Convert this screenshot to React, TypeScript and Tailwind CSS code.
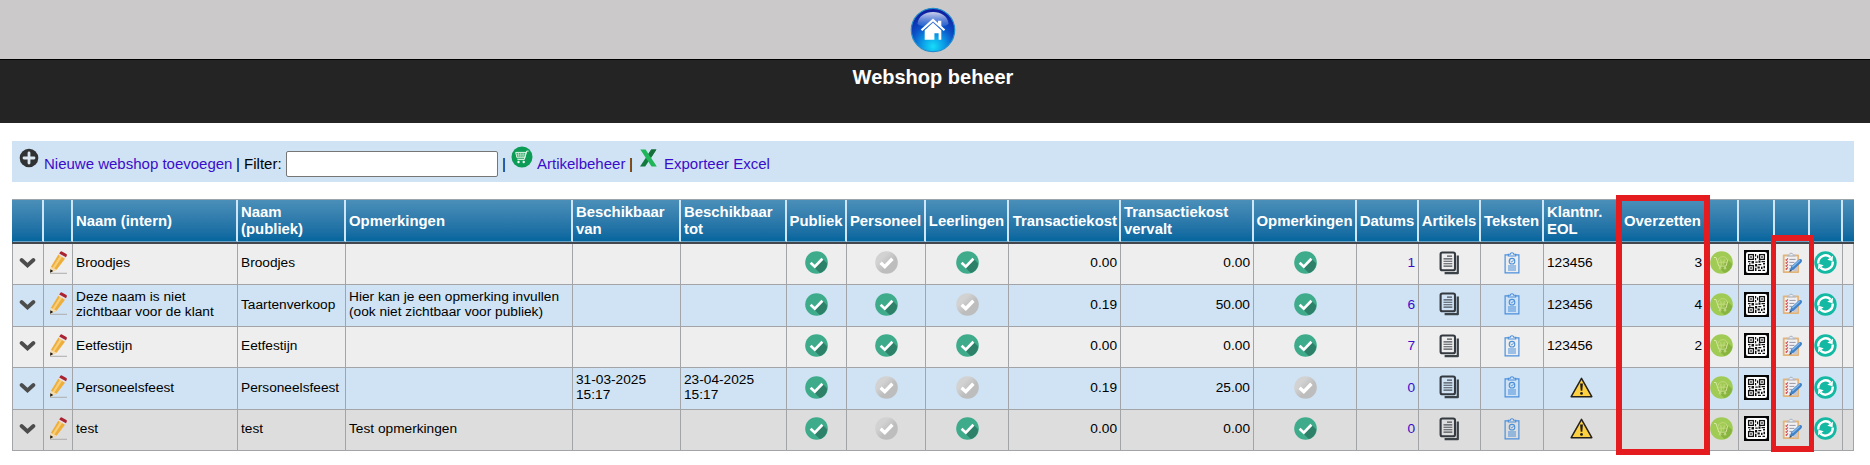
import React from "react";

type Row = {
  intern: string[];
  publiek: string;
  opm: string[];
  van: string[];
  tot: string[];
  flags: boolean[];
  kost: string;
  vervalt: string;
  opmerkingen: boolean;
  datums: number;
  klant: string;
  over: string;
  tone: string;
};

const rows: Row[] = [
  { intern: ["Broodjes"], publiek: "Broodjes", opm: [], van: [], tot: [], flags: [true, false, true], kost: "0.00", vervalt: "0.00", opmerkingen: true, datums: 1, klant: "123456", over: "3", tone: "h-[41px] bg-[#eeeeee]" },
  { intern: ["Deze naam is niet", "zichtbaar voor de klant"], publiek: "Taartenverkoop", opm: ["Hier kan je een opmerking invullen", "(ook niet zichtbaar voor publiek)"], van: [], tot: [], flags: [true, true, false], kost: "0.19", vervalt: "50.00", opmerkingen: true, datums: 6, klant: "123456", over: "4", tone: "h-[42px] bg-[#cfe3f4]" },
  { intern: ["Eetfestijn"], publiek: "Eetfestijn", opm: [], van: [], tot: [], flags: [true, true, true], kost: "0.00", vervalt: "0.00", opmerkingen: true, datums: 7, klant: "123456", over: "2", tone: "h-[41px] bg-[#eeeeee]" },
  { intern: ["Personeelsfeest"], publiek: "Personeelsfeest", opm: [], van: ["31-03-2025", "15:17"], tot: ["23-04-2025", "15:17"], flags: [true, false, false], kost: "0.19", vervalt: "25.00", opmerkingen: false, datums: 0, klant: "", over: "", tone: "h-[42px] bg-[#cfe3f4]" },
  { intern: ["test"], publiek: "test", opm: ["Test opmerkingen"], van: [], tot: [], flags: [true, false, true], kost: "0.00", vervalt: "0.00", opmerkingen: true, datums: 0, klant: "", over: "", tone: "h-[41px] bg-[#dddddd]" },
];

const headers: string[][] = [
  [], [], ["Naam (intern)"], ["Naam", "(publiek)"], ["Opmerkingen"], ["Beschikbaar", "van"], ["Beschikbaar", "tot"],
  ["Publiek"], ["Personeel"], ["Leerlingen"], ["Transactiekost"], ["Transactiekost", "vervalt"], ["Opmerkingen"],
  ["Datums"], ["Artikels"], ["Teksten"], ["Klantnr.", "EOL"], ["Overzetten"], [], [], [], [], [],
];

const columns =
  "grid grid-cols-[31px_29px_165px_108px_227px_108px_106px_60px_79px_83px_112px_133px_103px_62px_62px_63px_76px_86px_33px_36px_35px_33px_11px]";

function Check({ on }: { on: boolean }) {
  return (
    <svg width="23" height="23" viewBox="0 0 23 23" className="block">
      <defs>
        <linearGradient id="off" x1="0" y1="0" x2="1" y2="1">
          <stop offset="0.3" stopColor="#d2d2d2" />
          <stop offset="0.6" stopColor="#bdbdbd" />
        </linearGradient>
      </defs>
      <circle cx="11.5" cy="11.5" r="11.3" fill={on ? "#3eab8b" : "url(#off)"} />
      {on && <path d="M17.8 8 22.2 12.400A11 11 0 0 1 14.8 22L9 16.2Z" fill="#2e8169" />}
      <path d="m5.6 11.8 4.2 3.9 7.6-7.9" fill="none" stroke="#fff" strokeWidth={on ? 2.7 : 3.4} />
    </svg>
  );
}

function Chevron() {
  return (
    <svg width="17" height="12" viewBox="0 0 17 12" className="mt-px mr-px block">
      <path d="m2.6 3 5.9 5.4L14.4 3" fill="none" stroke="#4c4c4c" strokeWidth="3.8" strokeLinecap="round" />
    </svg>
  );
}

function Pencil() {
  return (
    <svg width="20" height="24" viewBox="0 0 20 24" className="block">
      <path d="M2 22.300h17" stroke="#b0b0b0" strokeWidth="1.1" />
      <path d="M2.300 21.500 3 15.800 10.400 3.400l6.800 4L8.600 18.800Z" fill="#eeae3c" />
      <path d="m4.600 16.500 7.700-12.300 2.100 1.200-8 12Z" fill="#f8cf78" />
      <path d="M2.300 21.700 2.900 15.800 8.700 18.700Z" fill="#f3dcb2" />
      <path d="m2.100 21.800.3-3.600L5.200 20Z" fill="#151515" />
      <path d="m10.200 3.800.9-1.500 6.900 3.900-1 1.600Z" fill="#e8dfe2" />
      <path d="M11.200 2.500 12.400.700q.6-.7 1.500-.2l4.500 2.500q.8.600.4 1.400L18 6.300Z" fill="#a92331" />
    </svg>
  );
}

function Pages() {
  return (
    <svg width="21" height="24" viewBox="0 0 21 24" className="block" fill="none">
      <path d="M18.8 4.4v17.8H5.6" stroke="#3b4248" strokeWidth="2.2" strokeLinejoin="round" />
      <rect x="1.6" y="1.5" width="14.4" height="17.8" rx="1.8" stroke="#343a40" strokeWidth="2.1" />
      <path d="M8 5.1h5M4.5 7.9h8.8M4.5 10.3h8.8M4.5 12.7h8.8M4.5 15.1h8.8" stroke="#4d5359" strokeWidth="1.1" />
    </svg>
  );
}

function Badge() {
  return (
    <svg width="16" height="22" viewBox="0 0 16 22" className="block" fill="none" stroke="#4b8fdb">
      <path d="M4.5 2.8H1.1v18.1h13.8V2.8h-3.4" strokeWidth="1.2" />
      <path d="M4.3 4V2.3h1.9C6.5.3 9.5.3 9.8 2.3h1.9V4Z" strokeWidth="1.1" />
      <circle cx="8" cy="9.2" r="2.8" strokeWidth="1.1" />
      <path d="m6.6 9 1.1 1 1.8-1.9" strokeWidth="1" />
      <path d="M4 14h8M4 16h8M4 18h8" strokeWidth="1.1" />
    </svg>
  );
}

function GreenCart() {
  return (
    <svg width="23" height="23" viewBox="0 0 23 23" className="mr-px block" fill="none">
      <circle cx="11.5" cy="11.5" r="11.3" fill="#a0cb54" />
      <path d="m17.3 8.500 5 4.5a11.3 11.3 0 0 1-8 9l-5-4.8Z" fill="#88b53f" />
      <path d="M4 6.500h2l2.800 8.600h7.200l1.800-6.500" stroke="#dbe9a6" strokeWidth=".9" />
      <path d="M8.200 9.500c.3-5 8.600-5 8.800-.5M8 11.200h9M10.800 8.200l.5 5.700M14.200 8.200l-.4 5.700" stroke="#c9dc86" strokeWidth=".8" />
      <circle cx="10.200" cy="17.2" r=".9" stroke="#dbe9a6" strokeWidth=".8" />
      <circle cx="15" cy="17.2" r=".9" stroke="#dbe9a6" strokeWidth=".8" />
    </svg>
  );
}

function Qr() {
  return (
    <svg width="25" height="25" viewBox="0 0 25 25" className="block">
      <rect width="25" height="25" fill="#050505" />
      <rect x="2" y="2" width="21" height="21" rx="2" fill="#fff" />
      <g fill="none" stroke="#111" strokeWidth="1.3">
        <rect x="4.600" y="4.600" width="4.800" height="4.800" />
        <rect x="15.600" y="4.600" width="4.800" height="4.800" />
        <rect x="4.600" y="15.600" width="4.800" height="4.800" />
      </g>
      <path
        fill="#111"
        d="M6.200 6.200h1.600v1.600H6.200zM17.200 6.200h1.600v1.600h-1.600zM6.200 17.200h1.600v1.600H6.200zM11 4h1.200v2.400H11zM13 5.500h1.200v2.700H13zM11 8h1.200v2.300H11zM4 11h2.500v1.300H4zM7.500 11h2.500v2.500H7.500zM5 13.200h1.500v1.200H5zM11.300 11.500h2.400v1.300h-2.400zM14.500 10.500h2v2.200h-2zM17.500 11h3.500v1.200h-3.500zM19 13h2v1.500h-2zM11 14h2.200v2.500H11zM14.300 14h3v1.300h-3zM11 17.800h1.500v3.200H11zM13.500 16.500h2.300v2h-2.300zM17 16.800h1.500v2.200H17zM19.500 15.800H21v2.500h-1.500zM14 19.700h3v1.300h-3zM18.500 19.700H21V21h-2.500z"
      />
    </svg>
  );
}

function Notes() {
  return (
    <svg width="20" height="22" viewBox="0 0 20 22" className="block" fill="none">
      <rect x=".8" y="2.6" width="16.2" height="18.4" rx=".8" fill="#e2b47a" />
      <path d="M2.6 4.4h12.7v14.8H2.6Z" fill="#f1f1f4" />
      <path d="M4.8 4.6V2.7h2.1C7.3.1 10.9.1 11.3 2.7h2.1v1.9Z" fill="#b3bbc9" />
      <path d="M7.6 2.7h3" stroke="#eef1f5" strokeWidth="1.2" />
      <path d="m3.6 7.5.8.8 1.5-2M3.6 10.5l.8.8 1.5-2M3.6 13.5l.8.8 1.5-2M3.6 16.6l.8.8 1.5-2" stroke="#cf5257" strokeWidth="1.1" />
      <path d="M7.4 7.4h6.2M7.4 10.4h5M7.4 13.4h3M7 17h4" stroke="#9796a4" strokeWidth="1" />
      <path d="m10.4 19.200 5.200-.2v-6Z" fill="#c9c5cc" />
      <path d="m7.600 19.400 1.500-4.900 7.100-6.500q2-1.800 3.400-.6 1 1.600-.6 3.400l-7.400 6.900Z" fill="#3f82c9" />
      <path d="m10.300 15 7.400-6.700" stroke="#86b9e8" strokeWidth="1.3" />
      <path d="m7.200 19.800 1-2.400 1.800 1.500Z" fill="#38485c" />
    </svg>
  );
}

function Sync() {
  return (
    <svg width="23" height="23" viewBox="0 0 23 23" className="mr-px block">
      <circle cx="11.5" cy="11.5" r="11.2" fill="#13b9a3" />
      <path d="M4.300 12.500A7.400 7.400 0 0 1 16.600 6.300M18.700 10.500A7.400 7.400 0 0 1 6.400 16.700" fill="none" stroke="#fff" strokeWidth="2.4" />
      <path d="M19 4.800 18.600 10.300 13.300 8.700ZM4 18.200l.4-5.500 5.300 1.600Z" fill="#fff" />
    </svg>
  );
}

function Warning() {
  return (
    <svg width="23" height="21" viewBox="0 0 23 21" className="mr-px block">
      <path d="M11.5 1.3 21.8 19.7H1.2Z" fill="#fcd040" stroke="#25201b" strokeWidth="1.5" strokeLinejoin="round" />
      <path d="M10.1 6.5h2.8l-.6 7.3h-1.6Z" fill="#211d18" />
      <circle cx="11.5" cy="16.4" r="1.4" fill="#211d18" />
    </svg>
  );
}

function HomeOrb() {
  return (
    <svg width="46" height="46" viewBox="0 0 46 46" className="block">
      <defs>
        <radialGradient id="orb" cx=".5" cy=".88" r=".85">
          <stop offset="0" stopColor="#16dcf8" />
          <stop offset=".3" stopColor="#0b9ce6" />
          <stop offset=".6" stopColor="#0b50c8" />
          <stop offset="1" stopColor="#101a9c" />
        </radialGradient>
        <linearGradient id="gloss" x1="0" y1="0" x2="0" y2="1">
          <stop offset="0" stopColor="#fff" stopOpacity=".8" />
          <stop offset="1" stopColor="#8bc4ff" stopOpacity=".15" />
        </linearGradient>
      </defs>
      <circle cx="23" cy="23" r="21.7" fill="url(#orb)" stroke="#218dcb" strokeWidth="1.2" />
      <path d="M7.500 16.500C8.500 9 15 5 23 5s14.500 4 15.500 11.500C36.500 21.500 9.500 21.500 7.500 16.500Z" fill="url(#gloss)" />
      <path d="m11.500 23.300L23 13l11.500 10.300" fill="none" stroke="#fff" strokeWidth="2.2" />
      <path d="M28 13.800h3.300v6L28 17Z" fill="#fff" />
      <path d="m14.700 23.200 8.300-7.500 8.300 7.500v9.600h-2.700v-6.500h-4.200v6.500h-9.700Z" fill="#fff" />
    </svg>
  );
}

function ShopCart() {
  return (
    <svg width="22" height="22" viewBox="0 0 22 22" fill="none" className="block">
      <circle cx="11" cy="11" r="10.500" fill="#0c9c55" />
      <path d="M17.600 5.100h-1.900l-2.400 8.500H6.400M4.700 6.400h10.500l-1.500 5.400H6Z" stroke="#e5f6ea" strokeWidth="1" />
      <path d="M5.200 8.200h9.500M5.600 10h8.600M7.300 6.500l.7 5.300M9.700 6.500l.2 5.300M12.200 6.500l-.3 5.300" stroke="#bfe7cd" strokeWidth=".8" />
      <circle cx="7.500" cy="16" r="1.200" fill="#fff" />
      <circle cx="12.700" cy="16" r="1.200" fill="#fff" />
    </svg>
  );
}

function ExcelX() {
  return (
    <svg width="17" height="18" viewBox="0 0 17 18" className="block">
      <path d="M11.300.5h5.100L5.200 17.500H0Z" fill="#137a3e" />
      <path d="M.3.500h5.300L16.800 17.500h-5.300Z" fill="#20b558" />
      <path d="M11.300.5h5.100l-5.200 8-2.700-3.800Z" fill="#166f3b" />
    </svg>
  );
}

function Cell({ children, className = "pb-[3px]" }: { children?: React.ReactNode; className?: string }) {
  return <div className={`flex items-center border-r border-b border-[#a2a4a7] ${className}`}>{children}</div>;
}

function TextCell({ children }: { children?: React.ReactNode }) {
  return <Cell className="pb-[3px] pl-[3px]">{children}</Cell>;
}

function IconCell({ children }: { children: React.ReactNode }) {
  return <Cell className="justify-center pb-[3px]">{children}</Cell>;
}

function Lines({ items }: { items: string[] }) {
  return (
    <div>
      {items.map((t) => (
        <div key={t} className="whitespace-nowrap">{t}</div>
      ))}
    </div>
  );
}

export default function App() {
  return (
    <div className="relative h-[465px] w-[1870px] overflow-hidden bg-white font-['Liberation_Sans',Arial,sans-serif] text-black">
      <header className="flex h-[60px] justify-center border-b border-black bg-[#cbc9ca] pt-[7px] pr-[4px]">
        <HomeOrb />
      </header>
      <div className="h-[63px] bg-[#242424] pt-[5px] pr-[4px] text-center text-[20px] leading-6 font-bold text-white">Webshop beheer</div>

      <div className="mt-[18px] ml-3 flex h-[41px] w-[1842px] items-start bg-[#cfe3f4] pl-[7px] text-[15px] leading-[17px] whitespace-nowrap">
        <svg width="20" height="20" viewBox="0 0 20 20" className="mt-[7px] mr-[5px]">
          <circle cx="10" cy="10" r="9.300" fill="#303234" />
          <path d="M10 5v10M5 10h10" stroke="#dbe8f1" strokeWidth="2.800" strokeLinecap="round" />
        </svg>
        <a className="mt-[14px] w-[188px] text-[#3a0ccb]">Nieuwe webshop toevoegen</a>
        <span className="mt-[14px] ml-1 w-[50px]">| Filter:</span>
        <input className="mt-[10px] h-[26px] w-[212px] rounded-[2px] border border-[#767676] bg-white" />
        <span className="mt-[14px] ml-[4px] w-[9px]">|</span>
        <span className="mt-[5px] mr-[4px]"><ShopCart /></span>
        <a className="mt-[14px] w-[89px] text-[#3a0ccb]">Artikelbeheer</a>
        <span className="mt-[14px] ml-[3px] w-[11px]">|</span>
        <span className="mt-2 mr-[7px]"><ExcelX /></span>
        <a className="mt-[14px] text-[#3a0ccb]">Exporteer Excel</a>
      </div>

      <div className="mt-[17px] ml-3 w-[1842px]">
        <div className={`${columns} h-[45px] border-t border-b-2 border-t-[#9aa4ab] border-b-[#42484d] bg-linear-to-b from-[#4a8fb9] to-[#00659d] pl-px text-[14.900px] leading-[17px] font-bold text-white`}>
          {headers.map((h, i) => (
            <div
              key={i}
              className={`flex items-center border-b border-b-[#6aa3c6] pt-px ${i < 22 ? "border-r-2 border-r-[#cfe6f6]" : ""} ${
                i === 17 ? "pl-1" : i === 10 ? "justify-end pr-[2px]" : h.length === 2 || i < 7 ? "pl-[3px]" : "justify-center"
              }`}
            >
              <Lines items={h} />
            </div>
          ))}
        </div>
        {rows.map((r, n) => (
          <div key={n} className={`${columns} ${r.tone} border-l border-[#a2a4a7] text-[13.700px] leading-[15px]`}>
            <IconCell><Chevron /></IconCell>
            <IconCell><Pencil /></IconCell>
            <TextCell><Lines items={r.intern} /></TextCell>
            <TextCell>{r.publiek}</TextCell>
            <TextCell><Lines items={r.opm} /></TextCell>
            <TextCell><Lines items={r.van} /></TextCell>
            <TextCell><Lines items={r.tot} /></TextCell>
            {r.flags.map((f, i) => (
              <IconCell key={i}><Check on={f} /></IconCell>
            ))}
            <Cell className="justify-end pr-[3px] pb-[3px]">{r.kost}</Cell>
            <Cell className="justify-end pr-[3px] pb-[3px]">{r.vervalt}</Cell>
            <IconCell><Check on={r.opmerkingen} /></IconCell>
            <Cell className="justify-end pr-[3px] pb-[3px] text-[#3a0ccb]">{r.datums}</Cell>
            <IconCell><Pages /></IconCell>
            <IconCell><Badge /></IconCell>
            {r.klant ? <TextCell>{r.klant}</TextCell> : <IconCell><Warning /></IconCell>}
            <Cell className="justify-end pr-[3px] pb-[3px]">{r.over}</Cell>
            <IconCell><GreenCart /></IconCell>
            <IconCell><Qr /></IconCell>
            <IconCell><Notes /></IconCell>
            <IconCell><Sync /></IconCell>
            <Cell />
          </div>
        ))}
      </div>

      <div className="absolute top-[195px] left-[1616px] h-[260px] w-[94px] border-6 border-[#e51c1f]" />
      <div className="absolute top-[235px] left-[1771px] h-[217px] w-[43px] border-x-5 border-y-6 border-[#e51c1f]" />
    </div>
  );
}
